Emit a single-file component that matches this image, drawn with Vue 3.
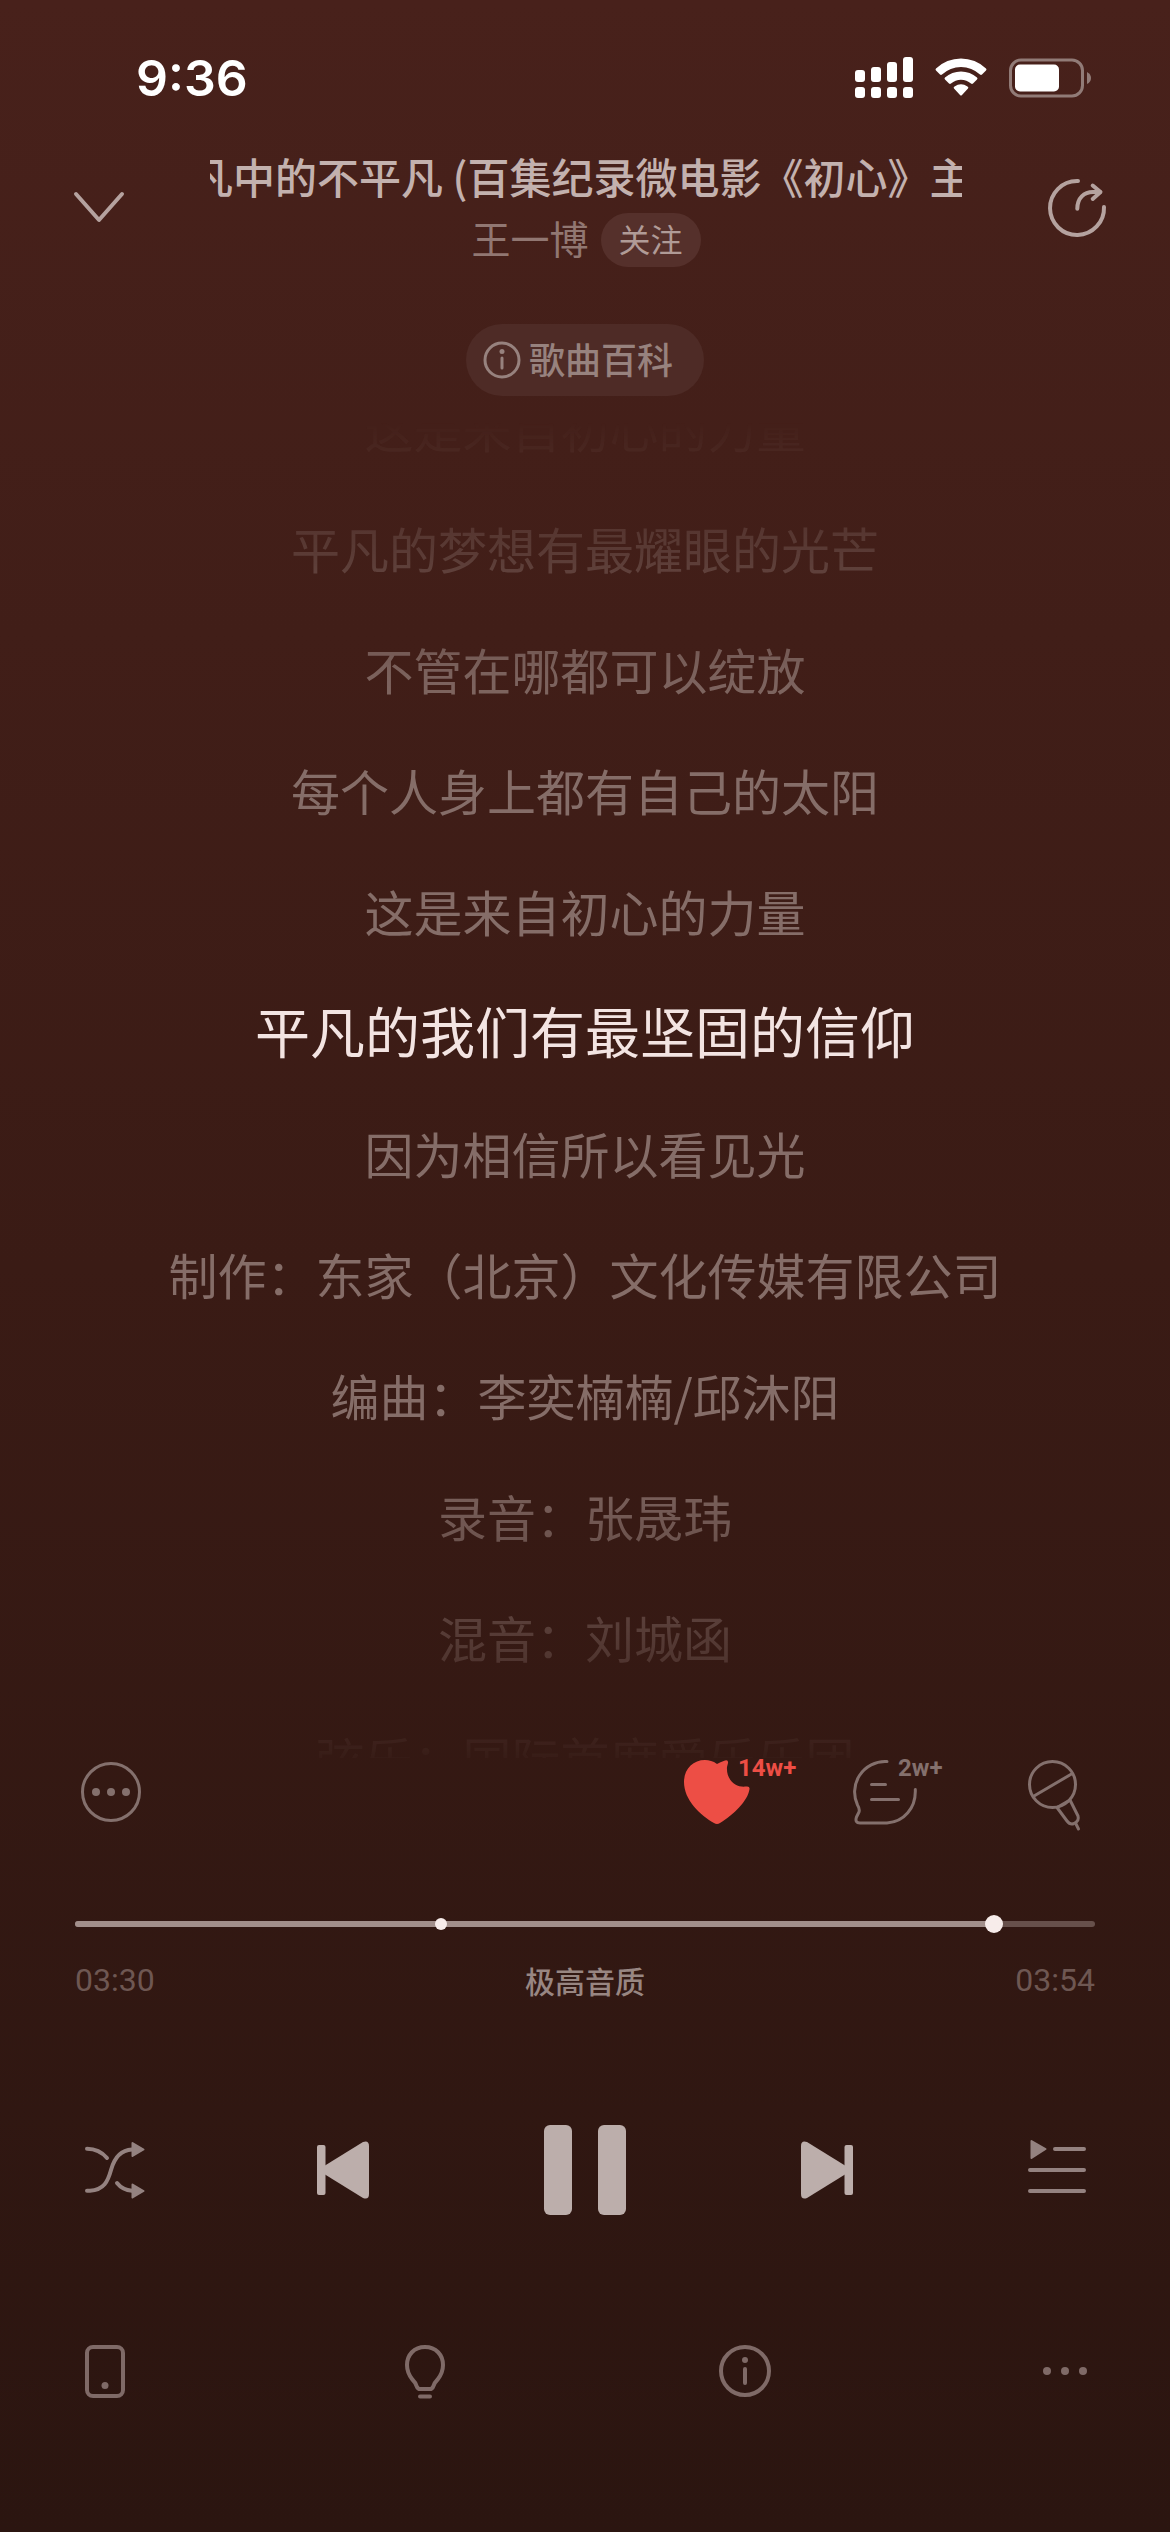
<script setup>
import {computed, ref} from 'vue';

const title = '平凡中的不平凡 (百集纪录微电影《初心》主题曲)';
const artist = '王一博';

const lyrics = [
  '这是来自初心的力量',
  '平凡的梦想有最耀眼的光芒',
  '不管在哪都可以绽放',
  '每个人身上都有自己的太阳',
  '这是来自初心的力量',
  '平凡的我们有最坚固的信仰',
  '因为相信所以看见光',
  '制作：东家（北京）文化传媒有限公司',
  '编曲：李奕楠楠/邱沐阳',
  '录音：张晟玮',
  '混音：刘城函',
  '弦乐：国际首席爱乐乐团',
];
const activeLine = ref(5);

// seconds
const duration = 234;
const chorusStart = 84;
const position = ref(210.9);
const playing = ref(true);

const playedPercent = computed(() => position.value / duration * 100);

function formatTime(time) {
  const minutes = String(Math.floor(time / 60)).padStart(2, '0');
  const seconds = String(Math.floor(time % 60)).padStart(2, '0');
  return `${minutes}:${seconds}`;
}
</script>

<template>
  <div class="player">
    <div class="status-bar">
      <span class="clock">9:36</span>
      <div class="status-icons">
        <svg width="58" height="42" viewBox="0 0 58 42" fill="#fff">
          <rect x="0" y="13" width="10" height="12" rx="3"/>
          <rect x="16" y="10" width="10" height="15" rx="3"/>
          <rect x="32" y="5" width="10" height="20" rx="3"/>
          <rect x="48" y="0" width="10" height="25" rx="3"/>
          <rect x="0" y="30" width="10" height="11" rx="3"/>
          <rect x="16" y="30" width="10" height="11" rx="3"/>
          <rect x="32" y="30" width="10" height="11" rx="3"/>
          <rect x="48" y="30" width="10" height="11" rx="3"/>
        </svg>
        <svg width="52" height="38" viewBox="0 0 52 38" fill="#fff">
          <path d="M1 11.500 Q0 10.500 1 9.500 A36 36 0 0 1 51 9.500 Q52 10.500 51 11.500 L47 15.500 Q46 16.300 45 15.500 A28 28 0 0 0 7 15.500 Q6 16.300 5 15.500Z"/>
          <path d="M10 20.500 Q9 19.500 10 18.500 A24 24 0 0 1 42 18.500 Q43 19.500 42 20.500 L38 24.500 Q37 25.300 36 24.500 A15 15 0 0 0 16 24.500 Q15 25.300 14 24.500Z"/>
          <path d="M19 29.500 Q18 28.500 19.500 27.600 A11.500 11.500 0 0 1 32.500 27.600 Q34 28.500 33 29.500 L27 36 Q26 37 25 36Z"/>
        </svg>
        <svg width="83" height="40" viewBox="0 0 83 40">
          <rect x="1.500" y="2" width="72" height="36" rx="10.500" fill="none" stroke="#917b77" stroke-width="3"/>
          <rect x="6" y="6.500" width="44" height="27" rx="5" fill="#fff"/>
          <path d="M78 14 Q82 16 82 20 Q82 24 78 26Z" fill="#917b77"/>
        </svg>
      </div>
    </div>

    <header class="header">
      <button class="icon-button" aria-label="收起">
        <svg width="50" height="32" viewBox="0 0 50 32" fill="none" stroke="#b5a29f" stroke-width="4" stroke-linecap="round" stroke-linejoin="round">
          <path d="M2 2 L25 28 L48 2"/>
        </svg>
      </button>
      <div class="song">
        <div class="title-window">
          <h1 class="title">{{ title }}</h1>
        </div>
        <div class="artist-row">
          <span class="artist">{{ artist }}</span>
          <button class="follow">关注</button>
        </div>
      </div>
      <button class="icon-button" aria-label="分享">
        <svg width="58" height="58" viewBox="0 0 58 58" fill="none" stroke="#b5a29f" stroke-width="4" stroke-linecap="round" stroke-linejoin="round">
          <path d="M30 2 H29 A27 27 0 1 0 56 28"/>
          <path d="M29.300 29.700 C29.300 19 36 13 45 13 H52"/>
          <path d="M44.700 6.500 L52.500 13 L44.700 20"/>
        </svg>
      </button>
    </header>

    <button class="wiki">
      <svg width="38" height="38" viewBox="0 0 38 38" fill="none" stroke="#97827e" stroke-width="3" stroke-linecap="round">
        <circle cx="19" cy="19" r="17"/>
        <path d="M19 17 V27"/>
        <circle cx="19" cy="10.500" r="2.500" fill="#97827e" stroke="none"/>
      </svg>
      <span class="wiki-label">歌曲百科</span>
    </button>

    <main class="lyrics">
      <p
        v-for="(line, index) in lyrics"
        :key="index"
        class="line"
        :class="{active: index === activeLine}"
      >{{ line }}</p>
    </main>

    <div class="toolbar">
      <button class="icon-button" aria-label="更多操作">
        <svg width="66" height="72" viewBox="0 0 66 72">
          <circle cx="33" cy="34" r="28.500" fill="none" stroke="#84706d" stroke-width="3"/>
          <g fill="#84706d">
            <circle cx="18" cy="34" r="4"/>
            <circle cx="33" cy="34" r="4"/>
            <circle cx="48" cy="34" r="4"/>
          </g>
        </svg>
      </button>
      <div class="toolbar-group">
        <button class="icon-button liked">
          <svg width="66" height="72" viewBox="0 0 66 72" fill="#ed4e45">
            <path d="M33 6 C29 3 25 2 21 2 C9 2 0 11 0 24 C0 42 16 57 30 65 Q33 67 36 65 C49 57 64 43 65.500 31 Q66 28 62 28.600 C52 30 42 22 43 9 L44 5 Q44.500 1.500 41 2.500 Q36 4 33 6Z"/>
          </svg>
          <span class="badge">14w+</span>
        </button>
        <button class="icon-button comments">
          <svg width="66" height="72" viewBox="0 0 66 72" fill="none" stroke="#84706d" stroke-width="3" stroke-linecap="round" stroke-linejoin="round">
            <path d="M35 3.500 H33 A30.500 30.500 0 0 0 5.500 47 Q8 51 7 54 L4.500 59 Q2.500 65 8 65 H35 C52 64 64 50 63.300 31.500"/>
            <path d="M19.500 26.500 H33.500 M19.500 41.500 H46.500"/>
          </svg>
          <span class="badge">2w+</span>
        </button>
        <button class="icon-button" aria-label="唱歌">
          <svg width="66" height="72" viewBox="0 0 66 72" fill="none" stroke="#84706d" stroke-width="3" stroke-linecap="round" stroke-linejoin="round">
            <circle cx="32.500" cy="26.500" r="23"/>
            <path d="M14 38 L51.500 16"/>
            <path d="M37 49.500 L47 63 Q50 67 54 65.500 Q59.500 63 58 58 L50 42 L37 49.500"/>
            <path d="M56 66 L58.500 71"/>
          </svg>
        </button>
      </div>
    </div>

    <div class="progress">
      <div class="track-wrap">
        <div class="track">
          <div class="played" :style="{width: playedPercent + '%'}"></div>
        </div>
        <span class="chorus-dot" :style="{left: chorusStart / duration * 100 + '%'}"></span>
        <input
          v-model.number="position"
          class="seek"
          type="range"
          min="0"
          :max="duration"
          step="0.1"
          aria-label="播放进度"
        >
      </div>
      <div class="times">
        <span class="time">{{ formatTime(position) }}</span>
        <button class="quality">极高音质</button>
        <span class="time total">{{ formatTime(duration) }}</span>
      </div>
    </div>

    <div class="controls">
      <button class="icon-button" aria-label="随机播放">
        <svg width="58" height="90" viewBox="0 0 58 90" fill="none" stroke="#948280" stroke-width="4" stroke-linecap="round">
          <path d="M3 23.700 C11 23.700 18 27 23 33"/>
          <path d="M3 65.700 H6 C20 65 24 56 27 45 C30 34 36 25 48 24.500"/>
          <path d="M33 58 Q38.500 65 48 65.700"/>
          <path d="M48.500 18 L59.500 24.500 L48.500 31Z M48.500 59.500 L59.500 66 L48.500 72.500Z" fill="#948280" stroke-width="2" stroke-linejoin="round"/>
        </svg>
      </button>
      <button class="icon-button" aria-label="上一首">
        <svg width="52" height="90" viewBox="0 0 52 90" fill="#bcaeab">
          <rect x="0" y="20" width="8.500" height="50" rx="2"/>
          <path d="M8 40.500 L46 17 Q52 15 52 21 V69 Q52 75 46 73 L8 49.500Z"/>
        </svg>
      </button>
      <button class="icon-button" :aria-label="playing ? '暂停' : '播放'" @click="playing = !playing">
        <svg width="82" height="90" viewBox="0 0 82 90" fill="#bcaeab">
          <template v-if="playing">
            <rect x="0" y="0" width="28" height="90" rx="6"/>
            <rect x="54" y="0" width="28" height="90" rx="6"/>
          </template>
          <path v-else d="M8 4 L76 45 L8 86Z"/>
        </svg>
      </button>
      <button class="icon-button" aria-label="下一首">
        <svg width="52" height="90" viewBox="0 0 52 90" fill="#bcaeab">
          <rect x="43.500" y="20" width="8.500" height="50" rx="2"/>
          <path d="M44 40.500 L6 17 Q0 15 0 21 V69 Q0 75 6 73 L44 49.500Z"/>
        </svg>
      </button>
      <button class="icon-button" aria-label="播放列表">
        <svg width="58" height="90" viewBox="0 0 58 90" fill="none" stroke="#948280" stroke-width="4" stroke-linecap="round">
          <path d="M27 24 H56 M2 45 H56 M2 66 H56"/>
          <path d="M3.500 16 L17.500 24 L3.500 33Z" fill="#948280" stroke-width="2" stroke-linejoin="round"/>
        </svg>
      </button>
    </div>

    <nav class="bottom-nav">
      <button class="icon-button" aria-label="设备">
        <svg width="54" height="54" viewBox="-6 0 54 54">
          <rect x="3" y="3" width="36" height="49" rx="6" fill="none" stroke="#7f6a67" stroke-width="4"/>
          <circle cx="21" cy="41.500" r="3.500" fill="#7f6a67"/>
        </svg>
      </button>
      <button class="icon-button" aria-label="灵感">
        <svg width="54" height="54" viewBox="-6 0 54 54" fill="none" stroke="#7f6a67" stroke-width="4" stroke-linecap="round" stroke-linejoin="round">
          <path d="M21 3 C10 3 3 11 3 21 C3 27 5 31 8 35 Q12 39 13 43 Q14 45 16 45 H26 Q28 45 29 43 Q30 39 34 35 C37 31 39 27 39 21 C39 11 32 3 21 3Z"/>
          <path d="M16 52.500 H26"/>
        </svg>
      </button>
      <button class="icon-button" aria-label="歌曲信息">
        <svg width="54" height="54" viewBox="0 0 54 54" fill="none" stroke="#7f6a67" stroke-width="4" stroke-linecap="round">
          <circle cx="27" cy="27" r="24"/>
          <path d="M27 25 V39"/>
          <circle cx="27" cy="16" r="3" fill="#7f6a67" stroke="none"/>
        </svg>
      </button>
      <button class="icon-button" aria-label="更多">
        <svg width="54" height="54" viewBox="0 0 54 54" fill="#7f6a67">
          <circle cx="9" cy="27" r="4"/>
          <circle cx="27" cy="27" r="4"/>
          <circle cx="45" cy="27" r="4"/>
        </svg>
      </button>
    </nav>
  </div>
</template>

<style>
body {
  margin: 0;
  background: #2b1510;
}
</style>

<style scoped>
.player {
  display: flex;
  flex-direction: column;
  box-sizing: border-box;
  height: 100vh;
  padding: 46px 0 134px;
  overflow: hidden;
  background: linear-gradient(#48211b, #3a1b15 50%, #2b1510);
  color: #c3b1ae;
  font-family: "Noto Sans CJK SC", sans-serif;
}

button {
  margin: 0;
  padding: 0;
  border: 0;
  background: none;
  color: inherit;
  font-family: inherit;
  cursor: pointer;
}

svg {
  display: block;
  flex: none;
  overflow: visible;
}

.icon-button {
  position: relative;
  flex: none;
}

.status-bar {
  display: flex;
  align-items: center;
  justify-content: space-between;
  height: 64px;
  padding: 0 78px 0 136px;
}

.clock {
  color: #fff;
  font-family: Inter, "Liberation Sans", sans-serif;
  font-size: 50px;
  font-weight: 600;
}

.status-icons {
  display: flex;
  align-items: center;
  gap: 22px;
}

.header {
  display: flex;
  align-items: center;
  gap: 86px;
  margin-top: 39px;
  padding: 0 64px 0 74px;
}

.song {
  flex: 1;
  min-width: 0;
}

.title-window {
  overflow: hidden;
}

.title {
  margin: 0 0 0 -61px;
  font-size: 42px;
  font-weight: 500;
  line-height: 54px;
  white-space: nowrap;
}

.artist-row {
  display: flex;
  align-items: flex-start;
  justify-content: center;
  gap: 12px;
  margin-top: 10px;
}

.artist {
  color: #917772;
  font-size: 39px;
  line-height: 48px;
}

.follow {
  padding: 0 18px 4px;
  border-radius: 27px;
  background: #55302b;
  color: #b09b97;
  font-size: 32px;
  line-height: 50px;
}

.wiki {
  display: flex;
  align-items: center;
  align-self: center;
  gap: 8px;
  height: 72px;
  margin: 57px 0 26px;
  padding: 0 31px 0 17px;
  border-radius: 36px;
  background: #4e2b26;
  color: #97827e;
}

.wiki-label {
  padding-bottom: 4px;
  font-size: 36px;
  font-weight: 500;
}

.lyrics {
  display: flex;
  flex: 1;
  flex-direction: column;
  justify-content: center;
  min-height: 0;
  padding-top: 4px;
  overflow: hidden;
  text-align: center;
  -webkit-mask-image: linear-gradient(transparent, rgba(0, 0, 0, 0.1) 30px, rgba(0, 0, 0, 0.36) 130px, rgba(0, 0, 0, 0.85) 250px, #000 330px, #000 calc(100% - 320px), rgba(0, 0, 0, 0.4) calc(100% - 120px), rgba(0, 0, 0, 0.05) 100%);
  mask-image: linear-gradient(transparent, rgba(0, 0, 0, 0.1) 30px, rgba(0, 0, 0, 0.36) 130px, rgba(0, 0, 0, 0.85) 250px, #000 330px, #000 calc(100% - 320px), rgba(0, 0, 0, 0.4) calc(100% - 120px), rgba(0, 0, 0, 0.05) 100%);
}

.line {
  flex: none;
  margin: 0;
  color: #856d68;
  font-size: 49px;
  line-height: 121px;
  white-space: nowrap;
}

.line.active {
  color: #f3e4e2;
  font-size: 55px;
  line-height: 117px;
  padding-bottom: 4px;
}

.toolbar {
  display: flex;
  justify-content: space-between;
  padding: 0 84px 0 78px;
}

.toolbar-group {
  display: flex;
  gap: 102px;
}

.badge {
  position: absolute;
  top: -2px;
  left: 54px;
  color: #84706d;
  font-family: Roboto, "Liberation Sans", sans-serif;
  font-size: 24px;
  font-weight: 700;
  line-height: 24px;
}

.comments .badge {
  left: 46px;
}

.liked .badge {
  color: #ed4e45;
}

.progress {
  margin-top: 82px;
  padding: 0 75px;
}

.track-wrap {
  position: relative;
  padding: 9px 0;
}

.track {
  height: 6px;
  border-radius: 3px;
  overflow: hidden;
  background: #67504b;
}

.played {
  height: 100%;
  background: #a28f8b;
}

.chorus-dot {
  position: absolute;
  top: 6px;
  width: 12px;
  height: 12px;
  margin-left: -6px;
  border-radius: 50%;
  background: #f7ecea;
}

/* half a thumb wider than the track on each side */
.seek {
  position: absolute;
  top: 0;
  left: -9px;
  width: calc(100% + 18px);
  height: 24px;
  margin: 0;
  background: none;
  -webkit-appearance: none;
  appearance: none;
}

.seek::-webkit-slider-thumb {
  width: 18px;
  height: 18px;
  border-radius: 50%;
  background: #f7ecea;
  -webkit-appearance: none;
  appearance: none;
}

.times {
  display: grid;
  grid-template-columns: 1fr auto 1fr;
  align-items: center;
  margin-top: 24px;
}

.time {
  color: #6e5752;
  font-family: Roboto, "Liberation Sans", sans-serif;
  font-size: 32px;
  line-height: 40px;
}

.total {
  text-align: right;
}

.quality {
  color: #988682;
  font-size: 30px;
  font-weight: 500;
  line-height: 40px;
}

.controls {
  display: flex;
  align-items: center;
  justify-content: space-between;
  margin-top: 125px;
  padding: 0 84px;
}

.bottom-nav {
  display: flex;
  justify-content: space-between;
  margin-top: 129px;
  padding: 0 78px;
}
</style>
